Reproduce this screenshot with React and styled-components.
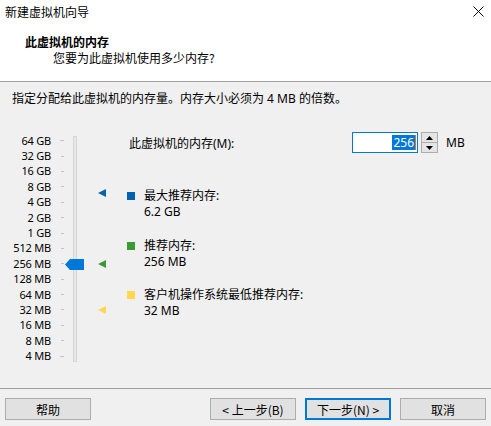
import React from 'react';
import styled, { createGlobalStyle } from 'styled-components';

const GlobalStyle = createGlobalStyle`
  html, body {
    margin: 0;
    padding: 0;
    background: #f0f0f0;
  }
  body {
    font-family: 'Noto Sans', 'Noto Sans CJK SC', sans-serif;
    font-size: 12px;
    color: #000;
  }
`;

const Window = styled.div`
  width: 491px;
  height: 426px;
  display: flex;
  flex-direction: column;
  background: #f0f0f0;
  overflow: hidden;
`;

const Header = styled.div`
  height: 81px;
  background: #fff;
  border-bottom: 1px solid #a0a0a0;
  box-sizing: content-box;
`;

const TitleBar = styled.div`
  height: 22px;
  display: flex;
  align-items: center;
  justify-content: space-between;
  padding: 0 7px 0 5px;
  font-family: 'Noto Sans CJK SC', sans-serif;
`;

const HeaderTitle = styled.div`
  margin-top: 12px;
  padding-left: 25px;
  line-height: 16px;
  font-weight: 700;
  font-family: 'Noto Sans CJK SC', sans-serif;
`;

const HeaderSub = styled.div`
  padding-left: 53px;
  line-height: 16px;
  font-family: 'Noto Sans CJK SC', sans-serif;
`;

const Body = styled.div`
  flex: 1;
  padding: 0 12px;
`;

const Intro = styled.div`
  margin-top: 9px;
  line-height: 16px;
`;

const Content = styled.div`
  margin-top: 23px;
  display: flex;
`;

const Scale = styled.div`
  position: relative;
  width: 78px;
  height: 236px;
  padding-top: 3px;
  box-sizing: border-box;
`;

const ScaleRow = styled.div`
  height: 15.4px;
  display: flex;
  align-items: center;
`;

const ScaleLabel = styled.div`
  width: 39px;
  text-align: right;
  font-size: 11px;
  line-height: 14px;
  letter-spacing: -0.2px;
  white-space: nowrap;
`;

const Tick = styled.div`
  margin-left: ${(p) => (p.$long ? 9 : 10)}px;
  width: ${(p) => (p.$long ? 4 : 3)}px;
  height: 1px;
  background: #c4c4c4;
`;

const Track = styled.div`
  position: absolute;
  left: 61px;
  top: 6px;
  width: 4px;
  height: 226px;
  box-sizing: border-box;
  border: 1px solid #d6d6d6;
  background: #e7e7e7;
`;

const Thumb = styled.svg`
  position: absolute;
  left: 53px;
  width: 19px;
  height: 11px;
`;

const Markers = styled.div`
  position: relative;
  width: 37px;
  height: 236px;
`;

const Marker = styled.svg`
  position: absolute;
  left: 8px;
  width: 8px;
  height: 8px;
`;

const Info = styled.div`
  flex: 1;
  display: flex;
  flex-direction: column;
  padding-right: 11px;
`;

const MemoryRow = styled.div`
  margin-top: 2px;
  height: 21px;
  display: flex;
  align-items: center;
`;

const MemoryLabel = styled.div`
  flex: 1;
  padding-left: 2px;
`;

const Input = styled.div`
  width: 66px;
  height: 21px;
  box-sizing: border-box;
  border: 1px solid #0078d7;
  background: #fff;
  display: flex;
  align-items: center;
  justify-content: flex-end;
  padding-right: 1px;
`;

const Selected = styled.span`
  background: #0078d7;
  color: #fff;
  line-height: 15px;
  padding: 0 1px;
`;

const Caret = styled.span`
  width: 1px;
  height: 15px;
  background: #e0762a;
`;

const Spin = styled.div`
  margin-left: 3px;
  width: 17px;
  height: 21px;
  display: flex;
  flex-direction: column;
`;

const SpinButton = styled.div`
  flex: 1;
  box-sizing: border-box;
  border: 1px solid #adadad;
  background: #e5e5e5;
  display: flex;
  align-items: center;
  justify-content: center;
  & + & {
    border-top: none;
  }
`;

const Unit = styled.div`
  margin-left: 8px;
  width: 22px;
`;

const Legend = styled.div`
  display: flex;
  margin-top: ${(p) => p.$top}px;
`;

const Swatch = styled.div`
  width: 8px;
  height: 8px;
  margin-top: 4px;
  background: ${(p) => p.$color};
`;

const LegendText = styled.div`
  margin-left: 9px;
`;

const LegendLine = styled.div`
  height: 16px;
  line-height: 16px;
  white-space: nowrap;
`;

const Footer = styled.div`
  height: 38px;
  border-top: 1px solid #a0a0a0;
  display: flex;
  justify-content: space-between;
  padding: 9px 5px 0;
  box-sizing: border-box;
`;

const ButtonGroup = styled.div`
  display: flex;
  gap: 9px;
`;

const Button = styled.div`
  width: 86px;
  height: 22px;
  box-sizing: border-box;
  border: ${(p) => (p.$default ? '2px solid #0078d7' : '1px solid #adadad')};
  background: #e1e1e1;
  display: flex;
  align-items: center;
  justify-content: center;
  font-family: 'Noto Sans CJK SC', sans-serif;
`;

const BLUE = '#0063b1';
const GREEN = '#3c9a35';
const YELLOW = '#ffd84d';

const labels = [
  '64 GB', '32 GB', '16 GB', '8 GB', '4 GB', '2 GB', '1 GB',
  '512 MB', '256 MB', '128 MB', '64 MB', '32 MB', '16 MB', '8 MB', '4 MB',
];

// centre of a value on the scale, relative to the scale's top
const posOf = (mb) => 11 + (16 - Math.log2(mb)) * 15.4;

const markers = [
  { mb: 6348.8, color: BLUE },
  { mb: 256, color: GREEN },
  { mb: 32, color: YELLOW },
];

const legend = [
  { color: BLUE, top: 35, title: '最大推荐内存:', value: '6.2 GB' },
  { color: GREEN, top: 18, title: '推荐内存:', value: '256 MB' },
  { color: YELLOW, top: 17, title: '客户机操作系统最低推荐内存:', value: '32 MB' },
];

export default function App() {
  return (
    <Window>
      <GlobalStyle />
      <Header>
        <TitleBar>
          <span>新建虚拟机向导</span>
          <svg width="11" height="11" viewBox="0 0 11 11">
            <path d="M0.5 0.5 L10.5 10.5 M10.5 0.5 L0.5 10.5" stroke="#000" strokeWidth="1" />
          </svg>
        </TitleBar>
        <HeaderTitle>此虚拟机的内存</HeaderTitle>
        <HeaderSub>您要为此虚拟机使用多少内存?</HeaderSub>
      </Header>
      <Body>
        <Intro>指定分配给此虚拟机的内存量。内存大小必须为 4 MB 的倍数。</Intro>
        <Content>
          <Scale>
            {labels.map((l, i) => (
              <ScaleRow key={l}>
                <ScaleLabel>{l}</ScaleLabel>
                <Tick $long={i === 0 || i === labels.length - 1} />
              </ScaleRow>
            ))}
            <Track />
            <Thumb viewBox="0 0 19 11" style={{ top: posOf(256) - 5.5 }}>
              <polygon points="0,5.5 5,0 19,0 19,11 5,11" fill="#0078d7" />
            </Thumb>
          </Scale>
          <Markers>
            {markers.map((m) => (
              <Marker key={m.mb} viewBox="0 0 8 8" style={{ top: posOf(m.mb) - 4 }}>
                <polygon points="0,4 8,0 8,8" fill={m.color} />
              </Marker>
            ))}
          </Markers>
          <Info>
            <MemoryRow>
              <MemoryLabel>此虚拟机的内存(M):</MemoryLabel>
              <Input>
                <Selected>256</Selected>
                <Caret />
              </Input>
              <Spin>
                <SpinButton>
                  <svg width="7" height="4" viewBox="0 0 7 4">
                    <polygon points="0,4 3.5,0 7,4" fill="#000" />
                  </svg>
                </SpinButton>
                <SpinButton>
                  <svg width="7" height="4" viewBox="0 0 7 4">
                    <polygon points="0,0 7,0 3.5,4" fill="#000" />
                  </svg>
                </SpinButton>
              </Spin>
              <Unit>MB</Unit>
            </MemoryRow>
            {legend.map((item) => (
              <Legend key={item.title} $top={item.top}>
                <Swatch $color={item.color} />
                <LegendText>
                  <LegendLine>{item.title}</LegendLine>
                  <LegendLine>{item.value}</LegendLine>
                </LegendText>
              </Legend>
            ))}
          </Info>
        </Content>
      </Body>
      <Footer>
        <Button>帮助</Button>
        <ButtonGroup>
          <Button>&lt; 上一步(B)</Button>
          <Button $default>下一步(N) &gt;</Button>
          <Button>取消</Button>
        </ButtonGroup>
      </Footer>
    </Window>
  );
}
